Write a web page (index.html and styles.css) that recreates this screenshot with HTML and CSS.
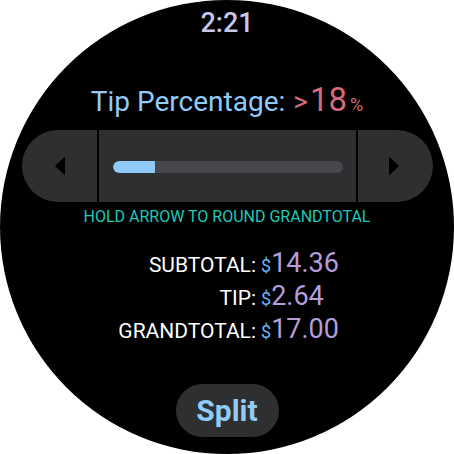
FILE: index.html
```html
<!DOCTYPE html>
<html>
<head>
<meta charset="utf-8">
<link rel="stylesheet" href="styles.css">
</head>
<body>
<div class="screen">
  <div class="time">2:21</div>
  <div class="title">Tip Percentage: <span class="gt">&gt;</span><span class="pct">18</span><span class="pcts">%</span></div>
  <div class="control">
    <div class="btn left"><svg width="12" height="20" viewBox="0 0 12 20"><polygon points="1,10 11,0.5 11,19.5" fill="#000"/></svg></div>
    <div class="mid"><div class="track"><div class="fill" style="width:42px"></div></div></div>
    <div class="btn right"><svg width="12" height="20" viewBox="0 0 12 20"><polygon points="11,10 1,0.5 1,19.5" fill="#000"/></svg></div>
  </div>
  <div class="hint">HOLD ARROW TO ROUND GRANDTOTAL</div>
  <div class="totals">
    <div class="lbl">SUBTOTAL:</div><div class="val"><span class="cur">$</span>14.36</div>
    <div class="lbl">TIP:</div><div class="val"><span class="cur">$</span>2.64</div>
    <div class="lbl">GRANDTOTAL:</div><div class="val"><span class="cur">$</span>17.00</div>
  </div>
  <div class="split">Split</div>
</div>
</body>
</html>
```
FILE: styles.css
```css
html, body {
  margin: 0;
  padding: 0;
  background: #fff;
}
.screen {
  width: 454px;
  height: 454px;
  border-radius: 50%;
  background: #000;
  overflow: hidden;
  display: flex;
  flex-direction: column;
  align-items: center;
  font-family: Roboto, "Noto Sans", sans-serif;
}
.time {
  margin-top: 7px;
  height: 32px;
  font-size: 27px;
  line-height: 32px;
  font-weight: 500;
  color: #c4c6ea;
}
.title {
  margin-top: 44px;
  height: 36px;
  font-size: 28px;
  line-height: 36px;
  color: #90caf9;
  white-space: nowrap;
}
.title span {
  line-height: 1;
}
.gt {
  color: #d46a7e;
  margin-left: 1px;
}
.pct {
  color: #d46a7e;
  font-size: 33px;
  margin-left: 2px;
}
.pcts {
  color: #d46a7e;
  font-size: 18px;
  margin-left: 3px;
}
.control {
  margin-top: 11px;
  width: 411px;
  height: 72px;
  display: flex;
  gap: 2px;
}
.btn {
  width: 73px;
  background: #2e2f31;
  display: flex;
  align-items: center;
  justify-content: center;
}
.left {
  border-radius: 36px 0 0 36px;
  padding-left: 2px;
}
.right {
  border-radius: 0 36px 36px 0;
  padding-right: 2px;
}
.btn svg {
  display: block;
}
.mid {
  flex: 1;
  background: #2e2f31;
  display: flex;
  align-items: center;
  padding: 1px 13px 0 14px;
}
.track {
  flex: 1;
  height: 12px;
  border-radius: 6px;
  background: #47484b;
  overflow: hidden;
}
.fill {
  height: 100%;
  background: #90caf9;
  border-radius: 6px 0 0 6px;
}
.hint {
  margin-top: 5px;
  height: 20px;
  font-size: 16px;
  line-height: 20px;
  color: #1fc9b8;
  white-space: nowrap;
}
.totals {
  margin-top: 20px;
  width: 454px;
  display: grid;
  grid-template-columns: 256px 1fr;
  grid-auto-rows: 33px;
  column-gap: 5px;
  align-items: baseline;
}
.lbl {
  text-align: right;
  font-size: 21px;
  line-height: 33px;
  color: #fff;
}
.val {
  font-size: 27px;
  line-height: 33px;
  color: #b39ddb;
}
.cur {
  font-size: 18px;
  line-height: 1;
  color: #64b5f6;
  margin-right: 0;
}
.split {
  margin-top: 38px;
  width: 103px;
  height: 53px;
  border-radius: 27px;
  background: #2e2f31;
  color: #90caf9;
  font-size: 30px;
  font-weight: 700;
  display: flex;
  align-items: center;
  justify-content: center;
}
```
